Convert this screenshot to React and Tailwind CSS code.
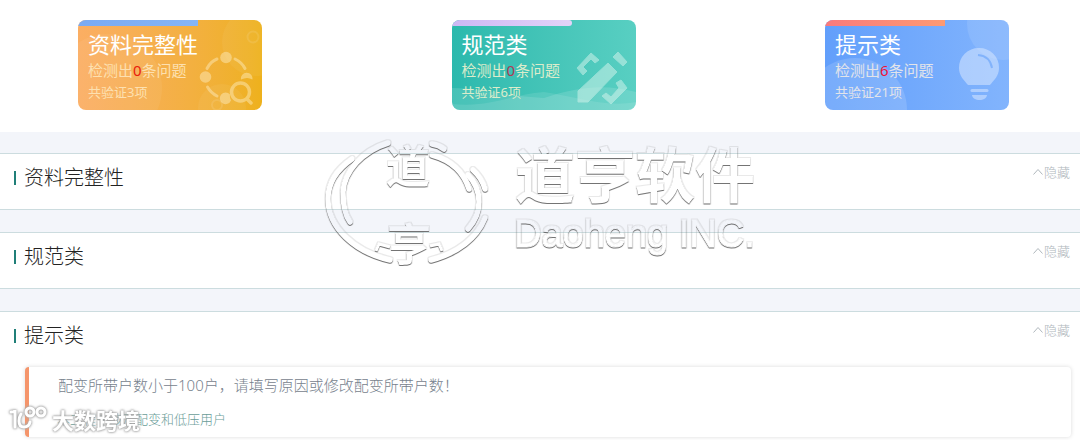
import React from 'react';

const FONT = "font-['Noto_Sans','Noto_Sans_CJK_SC',sans-serif]";

function CompletenessArt() {
  return (
    <svg viewBox="0 0 184 90" className="absolute inset-0 h-full w-full" aria-hidden="true">
      <circle cx="178" cy="22" r="34" fill="#fff" opacity="0.05" />
      <circle cx="30" cy="68" r="54" fill="#fff" opacity="0.06" />
      <circle cx="144" cy="88" r="24" fill="#fff" opacity="0.05" />
      <circle cx="175" cy="17" r="5.500" fill="none" stroke="#fff" strokeWidth="2" opacity="0.1" />
      <circle cx="139" cy="85" r="5" fill="none" stroke="#fff" strokeWidth="2" opacity="0.1" />
      <g opacity="0.42">
        <g fill="none" stroke="#fff3d0" strokeWidth="3" strokeLinecap="round">
          <path d="M129 48.500q3.500-7 10-9.500" />
          <path d="M157 39q7 3.500 10 9.500" />
          <path d="M129.500 67q3.500 6 9.500 9" />
        </g>
        <circle cx="148" cy="37.500" r="5.800" fill="#fff3d0" />
        <circle cx="127.500" cy="57" r="5.800" fill="#fff3d0" />
        <path d="M163 59.500a5.800 5.800 0 1 1 11.400 0q-5-3-11.400 0Z" fill="#fff3d0" />
        <path d="M152 74.500a5.800 5.800 0 1 0 1 6q-1.500-3-1-6Z" fill="#fff3d0" />
        <circle cx="162.500" cy="72" r="9" fill="none" stroke="#fff3d0" strokeWidth="3.500" />
        <path d="m169.500 79.500 3.500 3.500" stroke="#fff3d0" strokeWidth="3.500" strokeLinecap="round" />
      </g>
    </svg>
  );
}

function StandardArt() {
  return (
    <svg viewBox="0 0 184 90" className="absolute inset-0 h-full w-full" aria-hidden="true">
      <path d="M0 68c30 0 52 8 92 10c36-12 62-14 92-6v18H0Z" fill="#fff" opacity="0.13" />
      <path d="M0 84c40 4 60-10 92-12c30 4 60 16 92 10v8H0Z" fill="#fff" opacity="0.1" />
      <g fill="#d9f5ee" stroke="#d9f5ee" strokeWidth="1" strokeLinejoin="round" opacity="0.5">
        <path d="m126 71 30-28 9 9-29 30h-10Z" />
        <path d="m161 37 5-5 9 10-4 4Z" />
        <path d="m125 48 14-15 8 7-4 3-4-4-8 8 4 4-4 4Z" />
        <path d="m169 60 6 8-16 16-9-8 4-3 5 4 8-9-3-5Z" />
      </g>
    </svg>
  );
}

function HintArt() {
  return (
    <svg viewBox="0 0 184 90" className="absolute inset-0 h-full w-full" aria-hidden="true">
      <circle cx="30" cy="90" r="52" fill="#fff" opacity="0.14" />
      <circle cx="178" cy="4" r="36" fill="#fff" opacity="0.1" />
      <g fill="#d7e7ff" opacity="0.55">
        <path d="M154 28a19.500 19.500 0 0 1 20 20c0 8-5 12-9 17H143c-4-5-9-9-9-17a19.500 19.500 0 0 1 20-20Z" />
        <path d="M147 69h15a1.500 1.500 0 0 1 0 3h-15a1.500 1.500 0 0 1 0-3Z" />
        <path d="M147 75h15c0 3-4 5-7.500 5s-7.500-2-7.500-5Z" />
      </g>
      <path d="M153 35q12 1 14 13" fill="none" stroke="#82b3fb" strokeWidth="2" />
    </svg>
  );
}

const cards = [
  {
    title: '资料完整性', issues: 0, checked: 3, Art: CompletenessArt,
    bg: 'bg-linear-to-r from-[#fbae63] to-[#eeb11c]',
    tab: 'bg-linear-to-r from-[#7aaaf3] to-[#85b5f6]',
    text: 'text-[#fde0b0]', count: 'text-[#e8200c]',
  },
  {
    title: '规范类', issues: 0, checked: 6, Art: StandardArt,
    bg: 'bg-linear-to-r from-[#2bb9ad] to-[#58cfc2]',
    tab: 'bg-linear-to-r from-[#cdb8f4] to-[#e3d3f8] rounded-r-sm',
    text: 'text-[#dceccb]', count: 'text-[#b03a55]',
  },
  {
    title: '提示类', issues: 6, checked: 21, Art: HintArt,
    bg: 'bg-linear-to-r from-[#629ffb] to-[#82b4fd]',
    tab: 'bg-linear-to-r from-[#f97a7c] to-[#fd9a72]',
    text: 'text-[#e2e4ea]', count: 'text-[#ee1238]',
  },
];

function SummaryCard({ title, issues, checked, Art, bg, tab, text, count }) {
  return (
    <article className={`relative h-[90px] w-[184px] overflow-hidden rounded-lg ${bg}`}>
      <Art />
      <div className={`relative h-1.5 w-[120px] ${tab}`} />
      <div className={`relative pt-0.5 pl-2.5 ${text}`}>
        <h2 className="text-[22px] leading-8 text-white">{title}</h2>
        <p className="text-[15px] leading-5">
          检测出<span className={count}>{issues}</span>条问题
        </p>
        <p className="pt-0.5 text-[13px] leading-5">共验证{checked}项</p>
      </div>
    </article>
  );
}

function Section({ title, children }) {
  return (
    <section className="border-y border-[#ccdcdf] bg-white">
      <div className="flex h-[55px] items-start justify-between pt-2 pr-2.5 pl-3.5">
        <h2 className="flex items-center gap-2 text-[20px] leading-8 font-light text-[#222]">
          <span className="h-3.5 w-0.5 bg-[#207f78]" />
          {title}
        </h2>
        <button type="button" className="flex items-center gap-px text-[13px] leading-5 font-light text-[#b0b7bc]">
          <svg viewBox="0 0 10 10" className="size-2.5" fill="none" stroke="currentColor" aria-hidden="true">
            <path d="m0.500 7.500 4.500-5 4.500 5" />
          </svg>
          隐藏
        </button>
      </div>
      {children}
    </section>
  );
}

function CompanyMark() {
  return (
    <svg viewBox="0 -40 440 220" className="pointer-events-none absolute top-[92px] left-[320px] w-[440px]" role="img" aria-label="道亨软件 Daoheng INC.">
      <filter id="emboss" x="-5%" y="-5%" width="110%" height="110%">
        <feOffset in="SourceAlpha" dx="0" dy="1.200" result="low" />
        <feComposite in="low" in2="SourceAlpha" operator="out" result="edge" />
        <feFlood floodColor="#555" floodOpacity="0.8" />
        <feComposite in2="edge" operator="in" result="dark" />
        <feMorphology in="SourceAlpha" operator="dilate" radius="0.800" result="wide" />
        <feComposite in="wide" in2="SourceAlpha" operator="out" result="rim" />
        <feFlood floodColor="#888" floodOpacity="0.18" />
        <feComposite in2="rim" operator="in" result="light" />
        <feMerge>
          <feMergeNode in="light" />
          <feMergeNode in="dark" />
        </feMerge>
      </filter>
      <g filter="url(#emboss)" className={FONT}>
        <g fill="none" stroke="#000" strokeWidth="5.500" strokeLinecap="round">
          <path d="M32 27C16 38 8 52 8 67C8 95 34 120 70 128" />
          <path d="M30 90C25 83 23 72 23 60C24 40 42 19 68 11" />
          <path d="M112 12q7 1 12 5" />
          <path d="M112 23q29 8 37 34" />
          <path d="M153 38q9 8 12 19" />
          <path d="M148 43C156 51 159 60 159 70C159 80 156 88 148 97" />
          <path d="M165 86C157 106 138 121 111 128" />
        </g>
        <text x="66" y="51" fontSize="44" fontWeight="700">道</text>
        <text x="67" y="129" fontSize="44" fontWeight="700">亨</text>
        <path d="M56 119l3-7 11 3M110 114l9-2 3 7" fill="none" stroke="#000" strokeWidth="3" />
        <text x="195" y="66" fontSize="60" fontWeight="700">道亨软件</text>
        <text x="194" y="115" fontSize="38" stroke="#000" strokeWidth="1" className="font-['Liberation_Sans',sans-serif]">Daoheng INC.</text>
      </g>
    </svg>
  );
}

function ChannelMark() {
  return (
    <div className="pointer-events-none absolute top-[404px] left-2 flex items-center gap-1 text-[22px] leading-8 font-bold text-white [filter:drop-shadow(0_0_1px_#999)_drop-shadow(0_0_1px_#bbb)]">
      <svg viewBox="0 0 40 32" className="h-8 w-10" fill="none" stroke="#fff" strokeWidth="3" strokeLinecap="round" aria-hidden="true">
        <path d="M3 8q4 0 4-2v17" />
        <path d="M13 10q-2 3-2 7q0 6 5 6q5 0 6-5" />
        <circle cx="22" cy="8" r="4" />
        <circle cx="33" cy="8" r="4" />
      </svg>
      <span>大数跨境</span>
    </div>
  );
}

export default function App() {
  return (
    <main className={`relative min-h-screen overflow-hidden bg-[#f3f5fa] ${FONT}`}>
      <header className="flex justify-between bg-white pt-5 pr-[71px] pb-[22px] pl-[78px]">
        {cards.map((card) => <SummaryCard key={card.title} {...card} />)}
      </header>
      <div className="flex flex-col gap-[22px] pt-[21px]">
        <Section title="资料完整性" />
        <Section title="规范类" />
        <Section title="提示类">
          <div className="mr-[9px] mb-3 ml-[25px] rounded-sm border-l-4 border-[#f5956b] bg-white py-2 pl-7 shadow-[0_0_4px_rgba(0,0,0,0.15)]">
            <p className="pl-px text-[15px] leading-5 font-light text-[#77828d]">配变所带户数小于100户，请填写原因或修改配变所带户数！</p>
            <p className="pt-4 pb-0.5 text-[13px] leading-4 font-light text-[#6a9d98]">本工程未涉及配变和低压用户</p>
          </div>
        </Section>
      </div>
      <CompanyMark />
      <ChannelMark />
    </main>
  );
}
